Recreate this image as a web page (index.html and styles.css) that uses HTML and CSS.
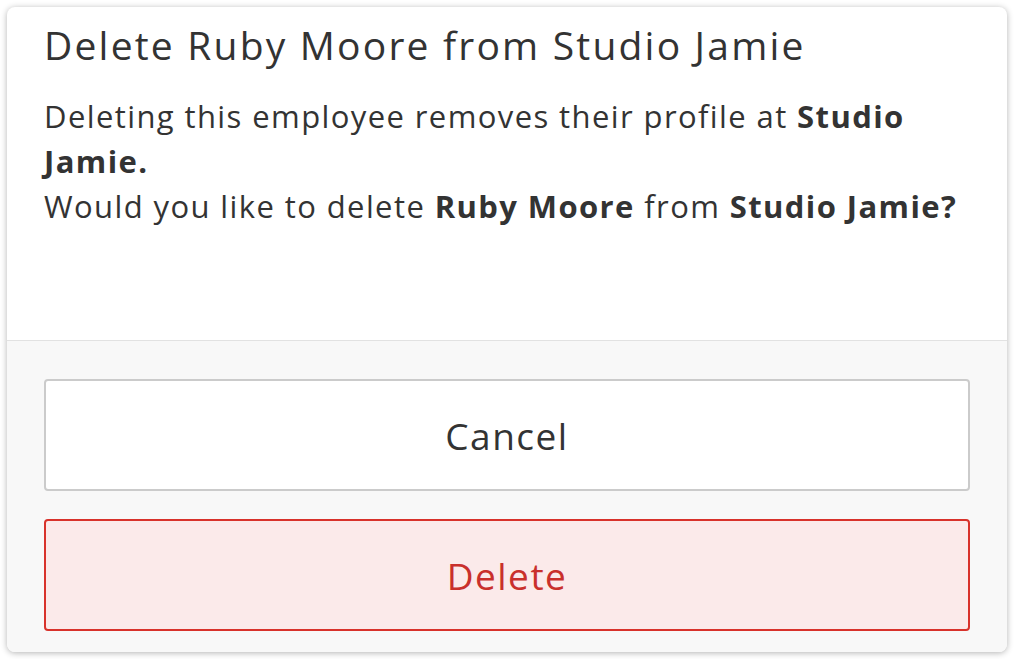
FILE: index.html
```html
<!DOCTYPE html>
<html lang="en">
<head>
    <meta charset="UTF-8">
    <meta name="viewport" content="width=device-width, initial-scale=1.0">
    <title>Delete Employee</title>
    <link rel="stylesheet" href="styles.css">
</head>
<body>
    <div class="dialog">
        <div class="dialog-body">
            <h1>Delete Ruby Moore from Studio Jamie</h1>
            <p>Deleting this employee removes their profile at <b>Studio</b> <b>Jamie.</b><br>
            Would you like to delete <b>Ruby Moore</b> from <b>Studio Jamie?</b></p>
        </div>
        <div class="dialog-footer">
            <button class="btn btn-cancel">Cancel</button>
            <button class="btn btn-delete">Delete</button>
        </div>
    </div>
</body>
</html>
```

FILE: styles.css
```css
body {
    margin: 0;
    padding: 7px 8px 7px 7px;
    background: #fff;
    font-family: "Open Sans", Arial, sans-serif;
    color: #333;
}
.dialog {
    height: 645px;
    box-sizing: border-box;
    background: #fff;
    border-radius: 8px;
    box-shadow: 0 1px 6px rgba(0, 0, 0, 0.3);
    overflow: hidden;
    display: flex;
    flex-direction: column;
}
.dialog-body {
    height: 334px;
    box-sizing: border-box;
    padding: 12px 37px 0;
    border-bottom: 1px solid #e2e2e2;
}
h1 {
    margin: 0;
    font-size: 39px;
    font-weight: 400;
    line-height: 52px;
    letter-spacing: 2.2px;
}
p {
    margin: 23px 0 0;
    font-size: 31px;
    line-height: 45px;
    letter-spacing: 1.4px;
}
b {
    font-weight: 700;
}
.dialog-footer {
    flex: 1;
    background: #f8f8f8;
    padding: 38px 37px 19px;
    display: flex;
    flex-direction: column;
    gap: 28px;
}
.btn {
    height: 112px;
    border-radius: 4px;
    font-family: inherit;
    font-size: 37px;
    letter-spacing: 1.5px;
    cursor: pointer;
}
.btn-cancel {
    background: #fff;
    border: 2px solid #cbcbcb;
    color: #333;
}
.btn-delete {
    background: #fbeaea;
    border: 2px solid #d8322b;
    color: #c9302c;
}
```
